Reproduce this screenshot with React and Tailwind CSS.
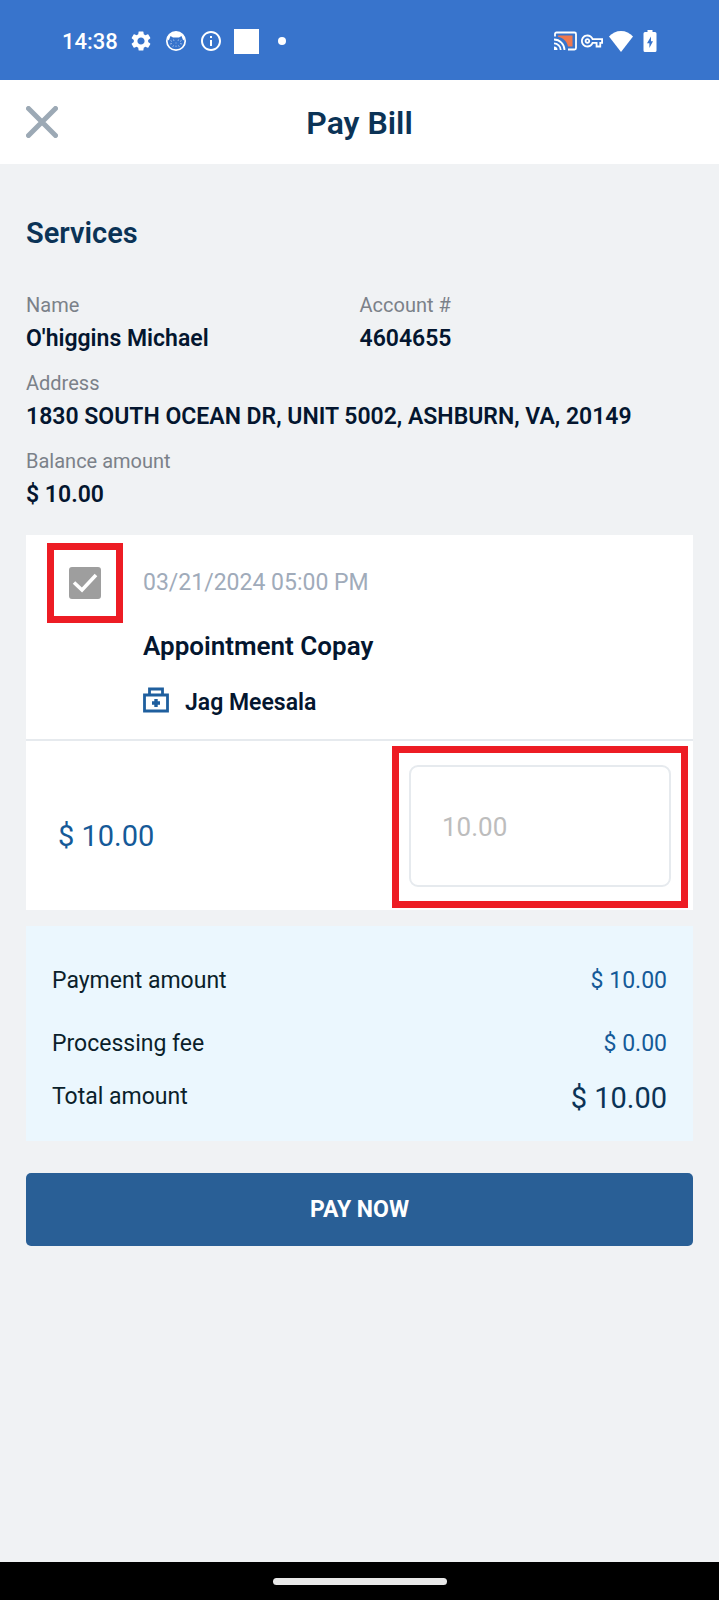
import { useState } from 'react';
import { MdInfoOutline, MdOutlineVpnKey, MdSettings } from 'react-icons/md';

const account = {
  name: "O'higgins Michael",
  number: '4604655',
  address: '1830 SOUTH OCEAN DR, UNIT 5002, ASHBURN, VA, 20149',
  balance: '$ 10.00',
};

const charge = {
  date: '03/21/2024 05:00 PM',
  title: 'Appointment Copay',
  provider: 'Jag Meesala',
  amount: '$ 10.00',
};

function FaceIcon() {
  return (
    <svg viewBox="0 0 24 24" className="size-6" aria-hidden="true">
      <circle cx="12" cy="12" r="9.200" fill="none" stroke="currentColor" strokeWidth="1.700" />
      <path
        d="M3 9.500C4.300 5.500 8 3 12 3s7.700 2.500 9 6.500l-1.800 2L17.500 7l-2.500 1.500H9L6.500 7l-1.700 4.500z"
        fill="currentColor"
      />
      <path
        d="M6.500 11.500l1.500 1M9.500 10.500l.5 1.500M14.500 10.500l-.5 1.500M17.500 11.500l-1.500 1M6 15l2-.5M18 15l-2-.5M8.500 17.500l1.500-1M15.500 17.500l-1.500-1M11.500 14h1M12 18v-1.500"
        stroke="currentColor"
        strokeWidth="0.8"
        opacity="0.6"
      />
    </svg>
  );
}

function CastIcon() {
  return (
    <svg viewBox="0 0 24 20" className="h-5 w-6" fill="none" aria-hidden="true">
      <path d="M5 4.500h14.500v11H15C14 10.500 10.500 7 5 5.800z" fill="#f0784e" />
      <path
        d="M2 5.500V3A1.500 1.500 0 0 1 3.500 1.500h18A1.500 1.500 0 0 1 23 3v14a1.500 1.500 0 0 1-1.500 1.500H15"
        stroke="currentColor"
        strokeWidth="1.800"
      />
      <path
        d="M1 8.500A10.500 10.500 0 0 1 11.500 19M1 12.300A6.700 6.700 0 0 1 7.700 19"
        stroke="currentColor"
        strokeWidth="1.800"
      />
      <path d="M1 15.500A3.500 3.500 0 0 1 4.500 19H1z" fill="currentColor" />
    </svg>
  );
}

function WifiIcon() {
  return (
    <svg viewBox="0 0 24 21" className="h-[21px] w-6" fill="currentColor" aria-hidden="true">
      <path d="M12 21L0 5.500C3.200 2 7.300 0 12 0s8.800 2 12 5.500z" />
    </svg>
  );
}

function BatteryIcon() {
  return (
    <svg viewBox="0 0 14 22" className="h-[22px] w-[14px]" aria-hidden="true">
      <path
        d="M4.500 0h5v2H12a1.500 1.500 0 0 1 1.500 1.500v17A1.500 1.500 0 0 1 12 22H2a1.500 1.500 0 0 1-1.500-1.500v-17A1.500 1.500 0 0 1 2 2h2.500z"
        fill="currentColor"
      />
      <path d="M8 6.500L4 13.200h2.400V18L10 11.300H8z" fill="#3874cc" />
    </svg>
  );
}

function MedicalBagIcon() {
  return (
    <svg viewBox="0 0 26 26" className="size-[26px]" fill="none" stroke="#1f5f9e" aria-hidden="true">
      <path d="M1.500 8h23v16h-23zM6.500 8V2h13v6" strokeWidth="2.800" />
      <path d="M13 12v8M9 16h8" strokeWidth="3.400" />
    </svg>
  );
}

function StatusBar() {
  return (
    <div className="flex h-20 items-center justify-between bg-[#3874cc] px-[62px] pt-0.5 text-white">
      <div className="flex items-center gap-[11px]">
        <span className="text-[22px] font-medium">14:38</span>
        <MdSettings className="size-6" />
        <FaceIcon />
        <MdInfoOutline className="size-6" />
        <span className="size-[25px] bg-white" />
        <span className="ml-2 size-2 rounded-full bg-white" />
      </div>
      <div className="flex items-center">
        <CastIcon />
        <MdOutlineVpnKey className="ml-1 size-[22px]" />
        <span className="ml-1.5">
          <WifiIcon />
        </span>
        <span className="ml-2.5">
          <BatteryIcon />
        </span>
      </div>
    </div>
  );
}

function Field({ label, value }) {
  return (
    <div>
      <dt className="text-[20px] leading-8 text-[#7b8189]">{label}</dt>
      <dd className="text-[23px] leading-9 font-semibold text-[#04162f]">{value}</dd>
    </div>
  );
}

export default function App() {
  const [selected, setSelected] = useState(true);

  return (
    <div className="flex min-h-screen flex-col bg-[#f0f2f4] font-['Roboto',sans-serif]">
      <StatusBar />

      <header className="grid h-[84px] grid-cols-[1fr_auto_1fr] items-center bg-white px-[26px]">
        <button type="button" aria-label="Close" className="size-8">
          <svg viewBox="0 0 32 32" className="size-8" aria-hidden="true">
            <path d="M2.500 2.500l27 27M29.500 2.500l-27 27" stroke="#9ca9b5" strokeWidth="5" strokeLinecap="round" />
          </svg>
        </button>
        <h1 className="pt-0.5 text-[32px] font-semibold text-[#0b3356]">Pay Bill</h1>
      </header>

      <main className="flex-1 px-[26px] pt-[49px] pb-8">
        <h2 className="text-[29px] leading-10 font-semibold text-[#0b3356]">Services</h2>

        <dl className="mt-9 flex flex-col gap-2.5">
          <div className="grid grid-cols-2">
            <Field label="Name" value={account.name} />
            <Field label="Account #" value={account.number} />
          </div>
          <Field label="Address" value={account.address} />
          <Field label="Balance amount" value={account.balance} />
        </dl>

        <section className="mt-[22px] bg-white">
          <div className="flex gap-5 border-b-2 border-[#e6eaee] pt-2 pb-5 pl-[21px]">
            <div className="grid h-20 w-[76px] place-items-center border-[7px] border-[#ed1c24]">
              <input
                type="checkbox"
                aria-label={charge.title}
                checked={selected}
                onChange={(e) => setSelected(e.target.checked)}
                className="peer col-start-1 row-start-1 size-8 appearance-none rounded-[3px] border-2 border-[#9e9e9e] checked:bg-[#9e9e9e]"
              />
              <svg
                viewBox="0 0 32 32"
                className="pointer-events-none invisible col-start-1 row-start-1 size-8 peer-checked:visible"
                aria-hidden="true"
              >
                <path d="M5 15.500l8 7.500L27 8" fill="none" stroke="#fff" strokeWidth="3.600" />
              </svg>
            </div>
            <div className="pt-6">
              <p className="text-[23px] leading-8 text-[#a0abba]">{charge.date}</p>
              <h3 className="mt-[29px] text-[26px] leading-9 font-semibold text-[#04162f]">{charge.title}</h3>
              <div className="mt-[23px] flex items-start gap-4">
                <MedicalBagIcon />
                <span className="text-[23px] leading-8 font-semibold text-[#04162f]">{charge.provider}</span>
              </div>
            </div>
          </div>

          <div className="flex items-center justify-between pt-[5px] pr-[5px] pb-0.5 pl-8">
            <span className="pt-[18px] text-[29px] leading-10 text-[#155a98]">{charge.amount}</span>
            <div className="w-[296px] border-[7px] border-[#ed1c24] px-2.5 pt-3 pb-3.5">
              <input
                type="text"
                aria-label="Amount to pay"
                defaultValue="10.00"
                className="block h-[122px] w-full rounded-[9px] border-2 border-[#e6eaee] bg-white px-[31px] pt-0.5 text-[26px] text-[#bdbdbd]"
              />
            </div>
          </div>
        </section>

        <dl className="mt-4 bg-[#ebf7fe] px-[26px] pt-[37px] pb-6 text-[23px] leading-9 text-[#0b1f2b]">
          <div className="flex justify-between">
            <dt>Payment amount</dt>
            <dd className="text-[#155a98]">$ 10.00</dd>
          </div>
          <div className="mt-[27px] flex justify-between">
            <dt>Processing fee</dt>
            <dd className="text-[#155a98]">$ 0.00</dd>
          </div>
          <div className="mt-[17px] flex justify-between">
            <dt>Total amount</dt>
            <dd className="text-[29px] leading-[38px] text-[#0b3356]">$ 10.00</dd>
          </div>
        </dl>

        <button
          type="button"
          className="mt-8 h-[73px] w-full rounded-[5px] bg-[#295f96] pt-0.5 text-[23px] font-bold text-white"
        >
          PAY NOW
        </button>
      </main>

      <div className="flex h-[38px] items-center justify-center bg-black">
        <span className="h-[7px] w-[174px] rounded-full bg-[#e8e8e8]" />
      </div>
    </div>
  );
}
